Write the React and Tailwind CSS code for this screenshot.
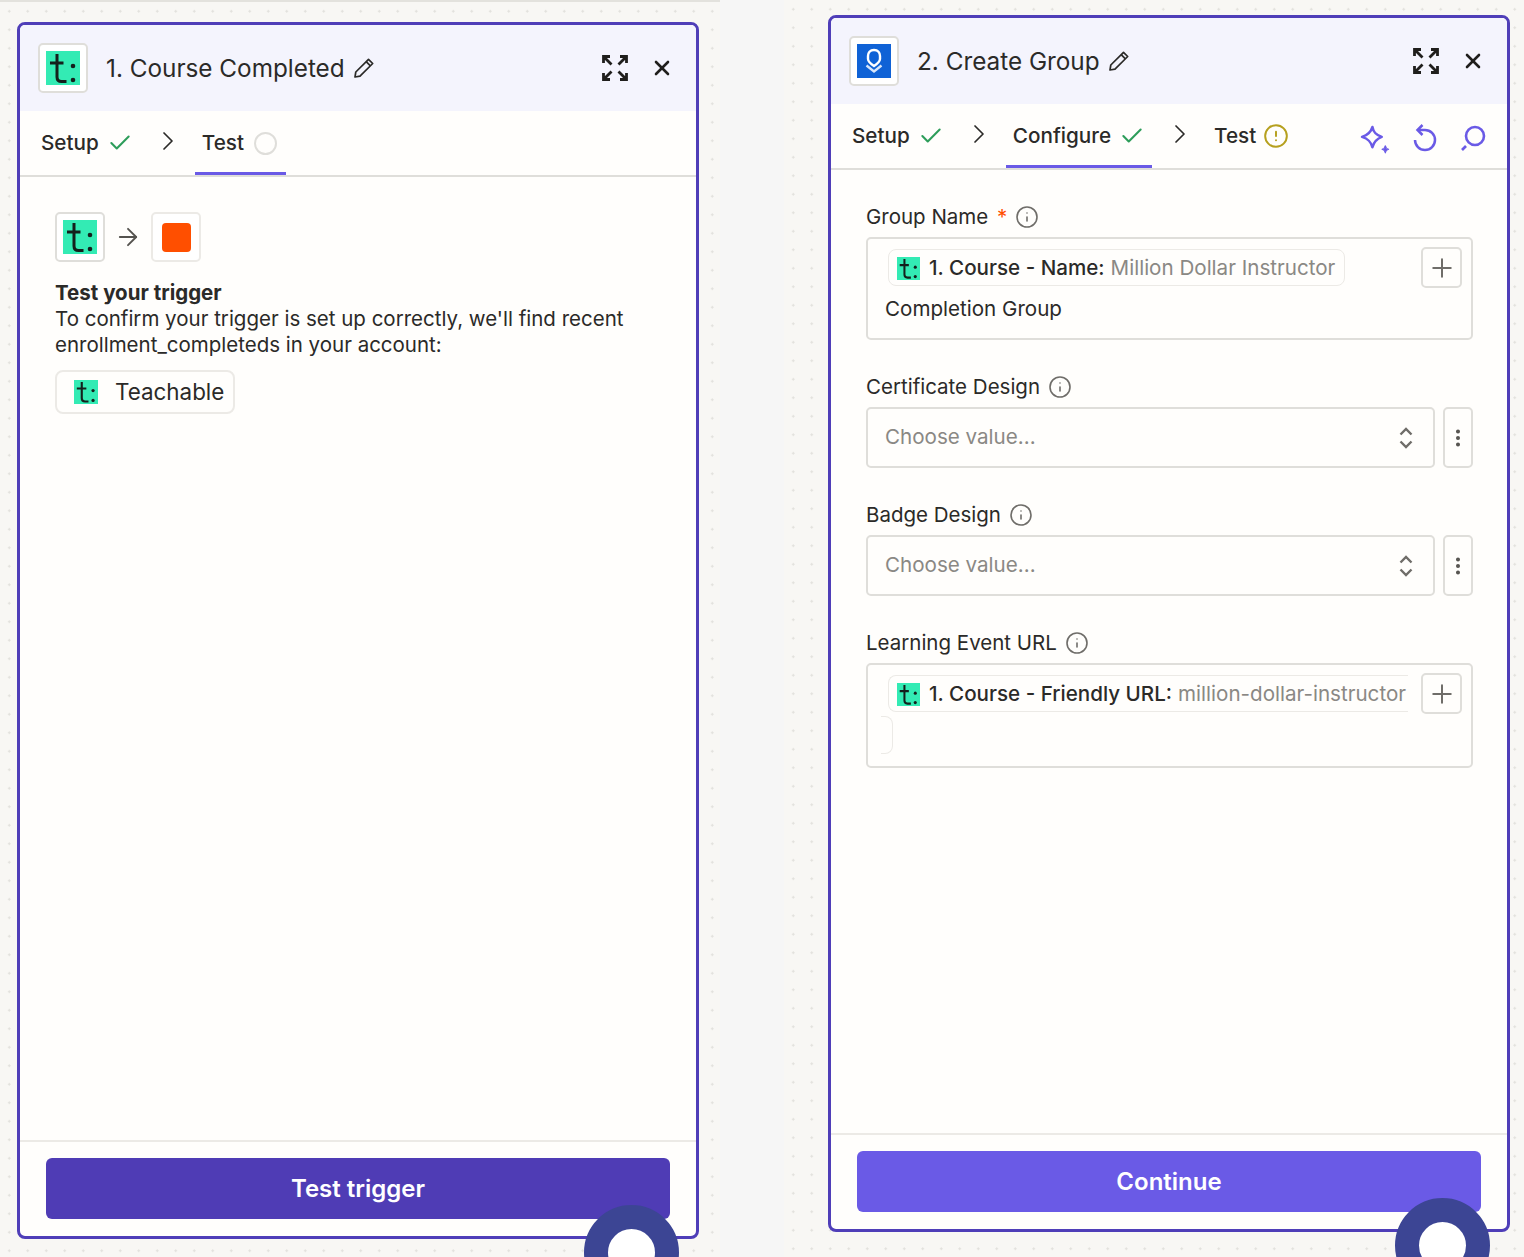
import React from "react";
import {
  Check,
  ChevronRight,
  CircleAlert,
  EllipsisVertical,
  Info,
  Plus,
  X,
  ArrowRight,
} from "lucide-react";

const TeachableLogo = ({ className }) => (
  <svg viewBox="0 0 34 34" className={className}>
    <rect width="34" height="34" fill="#33ebb4" />
    <path d="M11 3v23q0 4.500 4.500 4.500h5M4 12h13.500" fill="none" stroke="#14201c" strokeWidth="3" />
    <circle cx="27" cy="15" r="2.300" fill="#14201c" />
    <circle cx="27" cy="29" r="2.300" fill="#14201c" />
  </svg>
);

const LearnLogo = () => (
  <svg viewBox="0 0 34 34" className="w-[34px] h-[34px]">
    <rect width="34" height="34" fill="#0f62d6" />
    <path d="M17 6c4 0 6 3 6 6v3c0 3-3 5-6 7-3-2-6-4-6-7v-3c0-3 2-6 6-6z" fill="none" stroke="#fff" strokeWidth="2.400" />
    <path d="M9.500 21.500l7.500 6 7.500-6" fill="none" stroke="#d8e6fa" strokeWidth="2.400" />
  </svg>
);

const ExpandIcon = () => (
  <svg viewBox="0 0 28 28" className="w-[28px] h-[28px]" fill="none" stroke="#1f1e1c" strokeWidth="2.800">
    <path d="M2.500 9V2.500H9M2.500 2.500l8 8M19 2.500h6.500V9M25.500 2.500l-8 8M2.500 19v6.500H9M2.500 25.500l8-8M19 25.500h6.500V19M25.500 25.500l-8-8" />
  </svg>
);

const PencilIcon = () => (
  <svg viewBox="0 0 22 22" className="w-[22px] h-[22px]" fill="none" stroke="#2b2a28" strokeWidth="1.700" strokeLinejoin="round">
    <path d="M2 20l.8-5L15.500 2.300l4.200 4.200L7 19.200z" />
    <path d="M13.200 4.600l4.200 4.200" />
  </svg>
);

const SparkleIcon = () => (
  <svg viewBox="0 0 30 30" className="w-[31px] h-[31px] ml-[1px]" fill="none" stroke="#6a5ae6" strokeWidth="2.500" strokeLinejoin="round">
    <path d="M12 2c1 5 3 7.500 9 9.500-5 2-7.500 4.500-9 10-1.500-5.500-4-8-10-10 6-2 8.500-4.500 10-9.500z" />
    <path d="M24.500 20c.4 2 1.200 3 3.200 3.500-2 .5-2.800 1.500-3.200 3.500-.4-2-1.200-3-3.200-3.500 2-.5 2.800-1.500 3.200-3.500z" fill="#6a5ae6" strokeWidth="1" />
  </svg>
);

const UndoIcon = () => (
  <svg viewBox="0 0 28 28" className="w-[28px] h-[28px] mb-[4px]" fill="none" stroke="#6a5ae6" strokeWidth="2.500">
    <path d="M7 6h7a10 10 0 1 1-10 10" />
    <path d="M11.500 1L6.500 6l5 5" />
  </svg>
);

const SearchIcon = () => (
  <svg viewBox="0 0 28 28" className="w-[28px] h-[28px] mb-[4px]" fill="none" stroke="#6a5ae6" strokeWidth="2.600">
    <circle cx="16" cy="12" r="9" />
    <path d="M7 22l-4 4" />
  </svg>
);

const UpDownIcon = () => (
  <svg viewBox="0 0 14 22" className="w-[14px] h-[22px]" fill="none" stroke="#6f6d69" strokeWidth="2.400">
    <path d="M1.500 7.500L7 2l5.500 5.500M1.500 14.500L7 20l5.500-5.500" />
  </svg>
);

const InfoIcon = () => <Info className="w-[24px] h-[24px] text-[#6f6d69]" strokeWidth={1.600} />;

const Chevron = ({ className }) => (
  <ChevronRight className={`w-[32px] h-[32px] text-[#2b2a28] ${className}`} strokeWidth={1.300} />
);

const Tab = ({ label, active, icon }) => (
  <div className={`h-full flex items-center px-[7px] border-b-[3px] pt-[3px] ${active ? "border-[#6a5ae6]" : "border-transparent"}`}>
    <span className="text-[20.700px] font-medium text-[#2b2a28]">{label}</span>
    {icon}
  </div>
);

const GreenCheck = () => <Check className="ml-[8px] w-[26px] h-[26px] text-[#2d9d5a]" strokeWidth={1.900} />;

const PanelHeader = ({ title, logo }) => (
  <div className="h-[86px] shrink-0 rounded-t-[5px] bg-[#f4f4fd] flex items-center pl-[18px] pr-[22px]">
    <div className="w-[50px] h-[50px] rounded-[5px] border-2 border-[#dfdeda] bg-white flex items-center justify-center">
      {logo}
    </div>
    <span className="ml-[18px] text-[24.300px] text-[#2b2a28]">{title}</span>
    <span className="ml-[8px]">
      <PencilIcon />
    </span>
    <span className="ml-auto">
      <ExpandIcon />
    </span>
    <X className="ml-[21px] w-[24px] h-[24px] text-[#1f1e1c]" strokeWidth={2.600} />
  </div>
);

const Footer = ({ label, className }) => (
  <div className="mt-auto h-[96px] shrink-0 border-t-2 border-[#eceae6] px-[26px] pt-[16px]">
    <div className={`h-[61px] rounded-[6px] flex items-center justify-center text-white text-[24px] font-semibold ${className}`}>
      {label}
    </div>
  </div>
);

const Ring = () => (
  <div className="absolute left-[564px] top-[1180px] w-[95px] h-[95px] rounded-full border-[24px] border-[#3c4594] bg-white" />
);

const Label = ({ children }) => (
  <div className="flex items-center gap-[8px] h-[26px] text-[20.500px] text-[#2b2a28]">{children}</div>
);

const Token = ({ name, value, className }) => (
  <div className={`h-[37px] flex items-center border border-[#eceae6] pl-[8px] shrink-0 whitespace-nowrap text-[20.600px] ${className}`}>
    <TeachableLogo className="w-[23px] h-[23px]" />
    <span className="ml-[9px] font-medium text-[#2b2a28]">{name}</span>
    <span className="ml-[6px] text-[#8a8884]">{value}</span>
  </div>
);

const PlusButton = () => (
  <div className="w-[41px] h-[41px] shrink-0 rounded-[5px] border-2 border-[#dfdeda] flex items-center justify-center">
    <Plus className="w-[30px] h-[30px] text-[#6f6d69]" strokeWidth={1.600} />
  </div>
);

const SelectField = ({ label }) => (
  <div className="mt-[34px]">
    <Label>
      {label}
      <InfoIcon />
    </Label>
    <div className="mt-[7px] flex gap-[8px] h-[61px]">
      <div className="flex-1 rounded-[5px] border-2 border-[#dfdeda] flex items-center pl-[17px] pr-[20px] text-[20.600px] text-[#8a8884]">
        Choose value...
        <span className="ml-auto flex">
          <UpDownIcon />
        </span>
      </div>
      <div className="w-[30px] rounded-[5px] border-2 border-[#dfdeda] flex items-center justify-center">
        <EllipsisVertical className="w-[22px] h-[22px] text-[#55534f]" strokeWidth={2.400} />
      </div>
    </div>
  </div>
);

const CoursePanel = () => (
  <div className="relative w-[682px] h-[1217px] rounded-[8px] border-[3px] border-[#4f3eb8] bg-[#fffefc] flex flex-col">
    <PanelHeader title="1. Course Completed" logo={<TeachableLogo className="w-[34px] h-[34px]" />} />
    <div className="h-[66px] shrink-0 border-b-2 border-[#dfdeda] flex items-end pl-[14px]">
      <Tab label="Setup" icon={<GreenCheck />} />
      <Chevron className="mb-[18px] ml-[12px] mr-[11px]" />
      <Tab
        label="Test"
        active
        icon={<span className="ml-[10px] mr-[2px] w-[23px] h-[23px] rounded-full border-2 border-[#dfdeda]" />}
      />
    </div>
    <div className="px-[35px] pt-[35px]">
      <div className="flex items-center">
        <div className="w-[50px] h-[50px] rounded-[5px] border-2 border-[#dfdeda] bg-white flex items-center justify-center">
          <TeachableLogo className="w-[34px] h-[34px]" />
        </div>
        <ArrowRight className="mx-[9px] w-[28px] h-[28px] text-[#55534f]" strokeWidth={1.600} />
        <div className="w-[50px] h-[50px] rounded-[5px] border-2 border-[#eceae6] bg-white flex items-center justify-center">
          <div className="w-[29px] h-[29px] rounded-[4px] bg-[#ff4f00]" />
        </div>
      </div>
      <div className="mt-[18px] text-[20.500px] leading-[26px] text-[#2b2a28]">
        <div className="font-bold">Test your trigger</div>
        <div className="w-[590px]">
          To confirm your trigger is set up correctly, we'll find recent enrollment_completeds in your account:
        </div>
      </div>
      <div className="mt-[12px] w-[180px] h-[44px] rounded-[8px] border-2 border-[#eceae6] flex items-center pl-[17px] text-[22.400px] text-[#2b2a28]">
        <TeachableLogo className="w-[24px] h-[24px]" />
        <span className="ml-[17px]">Teachable</span>
      </div>
    </div>
    <Footer label="Test trigger" className="bg-[#4f3cb5]" />
    <Ring />
  </div>
);

const GroupPanel = () => (
  <div className="relative w-[682px] h-[1217px] rounded-[8px] border-[3px] border-[#4f3eb8] bg-[#fffefc] flex flex-col">
    <PanelHeader title="2. Create Group" logo={<LearnLogo />} />
    <div className="h-[66px] shrink-0 border-b-2 border-[#dfdeda] flex items-end pl-[14px] pr-[20px]">
      <Tab label="Setup" icon={<GreenCheck />} />
      <Chevron className="mb-[18px] ml-[12px] mr-[11px]" />
      <Tab label="Configure" active icon={<GreenCheck />} />
      <Chevron className="mb-[18px] ml-[12px] mr-[11px]" />
      <Tab
        label="Test"
        icon={<CircleAlert className="ml-[7px] w-[26px] h-[26px] text-[#b6a01e]" strokeWidth={1.800} />}
      />
      <div className="ml-auto h-[56px] flex items-center gap-[20px]">
        <SparkleIcon />
        <UndoIcon />
        <SearchIcon />
      </div>
    </div>
    <div className="pl-[35px] pr-[34px] pt-[34px]">
      <Label>
        <span>
          Group Name <span className="ml-[3px] text-[#ff4f00]">*</span>
        </span>
        <InfoIcon />
      </Label>
      <div className="mt-[7px] h-[103px] rounded-[5px] border-2 border-[#dfdeda] pl-[17px] pr-[9px] pt-[8px] flex justify-between">
        <div>
          <Token
            name="1. Course - Name:"
            value="Million Dollar Instructor"
            className="ml-[3px] mt-[2px] w-[457px] rounded-[8px] pt-[2px]"
          />
          <div className="mt-[8px] text-[20.600px] text-[#2b2a28]">Completion Group</div>
        </div>
        <PlusButton />
      </div>
      <SelectField label="Certificate Design" />
      <SelectField label="Badge Design" />
      <div className="mt-[34px]">
        <Label>
          Learning Event URL
          <InfoIcon />
        </Label>
        <div className="mt-[7px] h-[105px] rounded-[5px] border-2 border-[#dfdeda] pl-[13px] pr-[9px] pt-[8px] flex justify-between">
          <div className="overflow-hidden">
            <Token
              name="1. Course - Friendly URL:"
              value="million-dollar-instructor"
              className="ml-[7px] mt-[2px] w-[520px] rounded-l-[8px] border-r-0 pt-[2px]"
            />
            <div className="mt-[4px] w-[12px] h-[38px] rounded-r-[8px] border border-l-0 border-[#eceae6]" />
          </div>
          <PlusButton />
        </div>
      </div>
    </div>
    <Footer label="Continue" className="bg-[#6a5ae6]" />
    <Ring />
  </div>
);

const App = () => {
  return (
    <div className="w-[1524px] h-[1257px] overflow-hidden flex bg-[#f6f6f6] font-['Inter',sans-serif]">
      <div className="w-[720px] h-full shrink-0 border-t-2 border-[#e3e2dd] pt-[20px] pl-[17px] bg-[#f8f7f4] bg-[radial-gradient(#e2e1dc_1px,transparent_1px)] bg-[size:18.500px_18.500px]">
        <CoursePanel />
      </div>
      <div className="w-[64px] h-full shrink-0" />
      <div className="flex-1 h-full pt-[15px] pl-[44px] bg-[#f8f7f4] bg-[radial-gradient(#e2e1dc_1px,transparent_1px)] bg-[size:18.500px_18.500px]">
        <GroupPanel />
      </div>
    </div>
  );
};

export default App;
